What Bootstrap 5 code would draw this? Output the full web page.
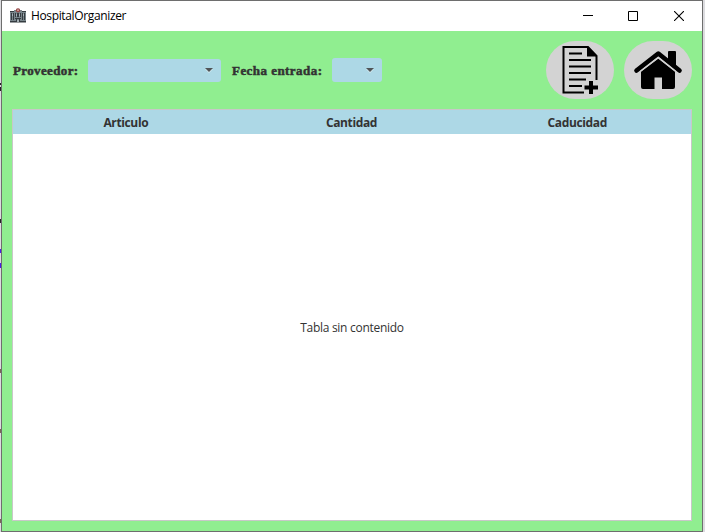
<!DOCTYPE html>
<html lang="es">
<head>
<meta charset="utf-8">
<meta name="viewport" content="width=device-width, initial-scale=1">
<title>HospitalOrganizer</title>
<link href="https://cdn.jsdelivr.net/npm/bootstrap@5.3.0/dist/css/bootstrap.min.css" rel="stylesheet">
<style>
html, body { height: 100%; }
body { background: #dcdcdf; font: 12px "Open Sans", "Noto Sans", sans-serif; color: #333; overflow: hidden; position: relative; }
svg { display: block; flex: none; }
.app-window { width: 702px; height: 532px; margin-left: 1px; border: 1px solid #6e6e6e; background: #90ee90; position: relative; }
.title-bar { height: 30px; background: #fff; color: #000; padding-left: 8px; }
.title-text { font-size: 12px; margin-left: 5px; letter-spacing: -.36px; line-height: 30px; }
.win-btn { width: 45.5px; height: 30px; background: none; border: 0; padding: 0; color: #000; }
.win-max { padding-right: 1px; }
.toolbar { height: 78px; padding: 0 10px; }
.field-label { font: bold 13px/20px "Liberation Serif", serif; -webkit-text-stroke: .5px #333; white-space: nowrap; padding: 2px 0 0 1px; }
.label-a { width: 67px; letter-spacing: .36px; }
.label-b { width: 90px; letter-spacing: .45px; }
.combo { background: #add8e6; border: 0; border-radius: 3px; padding: 0 8px 0 0; height: 23px; }
.combo-a { width: 133px; margin: 0 10px 0 9px; }
.combo-b { width: 50px; height: 24px; margin-left: 11px; }
.round-btn { width: 68px; height: 58px; border: 0; border-radius: 30px; background: #d3d3d3; padding: 0; color: #000; }
.data-table { width: 680px; height: 412px; margin-left: 10px; border: 1px solid #c8c8c8; background: #fff; }
.data-head { height: 24px; background: #add8e6; font-weight: 700; line-height: 26px; padding-right: 1px; letter-spacing: -.36px; }
.empty-note { letter-spacing: -.28px; padding-top: 1px; }
.stray { position: absolute; left: 0; width: 2px; }
</style>
<script src="https://cdn.jsdelivr.net/npm/bootstrap@5.3.0/dist/js/bootstrap.bundle.min.js"></script>
</head>
<body>
<svg class="stray" style="top:0" width="2" height="532" aria-hidden="true">
<path fill="#222" d="M0 83h2v2H0zM0 87h2v4H0zM0 219h2v4H0z"/><path fill="#4a20e8" d="M0 249h2v4H0zM0 263h1v5H0z"/><path fill="#765" d="M0 369h2v4H0zM0 429h2v4H0zM0 519h2v4H0z"/>
</svg>
<main class="app-window d-flex flex-column">
  <header class="title-bar d-flex align-items-center flex-shrink-0">
    <svg width="16" height="16" viewBox="0 0 16 16">
      <path fill="#78858b" d="M0 3h5v11H0zM11 3h5v11h-5zM4 2h8v12H4z"/>
      <path fill="#353c41" d="M0 3h4v1H0zM12 3h4v1h-4zM1 5h1v7H1zM3 5h1v7H3zM12 5h1v7h-1zM14 5h1v7h-1zM5 5h1v4H5zM7 5h2v4H7zM10 5h1v4h-1zM5 10h6v1H5zM6 11h1v3H6zM9 11h1v3H9zM0 13h16v1.5H0z"/>
      <circle cx="8" cy="2.3" r="2.1" fill="#8f3c3a"/><path fill="#d0a5a3" d="M7.5 1.300h1v2h-1zM7 1.800h2v1H7z"/>
      <path fill="#a5b0b5" d="M2 6h1v2H2zM13 6h1v2h-1zM6 6h1v2H6zM9 6h1v2H9zM7 12h2v2H7z"/>
    </svg>
    <span class="title-text me-auto">HospitalOrganizer</span>
    <button class="win-btn d-flex align-items-center justify-content-center" aria-label="Minimizar"><svg width="10" height="10"><path d="M0 4h10v1H0z"/></svg></button>
    <button class="win-btn win-max d-flex align-items-center justify-content-center" aria-label="Maximizar"><svg width="10" height="10"><path d="M.5.5h9v9h-9z" fill="none" stroke="#000"/></svg></button>
    <button class="win-btn d-flex align-items-center justify-content-center" aria-label="Cerrar"><svg width="10" height="10"><path d="M0 0l10 10M10 0L0 10" stroke="#000" stroke-width="1.1"/></svg></button>
  </header>
  <section class="toolbar d-flex align-items-center flex-shrink-0">
    <label class="field-label label-a">Proveedor:</label>
    <button class="combo combo-a d-flex align-items-center justify-content-end" aria-label="Proveedor"><svg width="8" height="5"><path d="M0 1h8L4 5z" fill="#fff" opacity=".5"/><path d="M0 0h8L4 4z" fill="#505457"/></svg></button>
    <label class="field-label label-b">Fecha entrada:</label>
    <button class="combo combo-b d-flex align-items-center justify-content-end" aria-label="Fecha entrada"><svg width="8" height="5"><path d="M0 1h8L4 5z" fill="#fff" opacity=".5"/><path d="M0 0h8L4 4z" fill="#505457"/></svg></button>
    <button class="round-btn ms-auto" aria-label="Nueva entrada">
      <svg width="68" height="58" viewBox="0 0 68 58"><path d="M38 51.5H17.5V6H42l8.500 9v24" fill="none" stroke="#000" stroke-width="2"/><path d="M41 5l10 10.5H41z"/><path d="M23 12.5h13M23 19h22M23 25.5h22M23 32h22M23 38.5h17M23 45h13" stroke="#000" stroke-width="2.2"/><path d="M43 40h4v4.500h5v4h-5V53h-4v-4.500h-4.500v-4H43z"/></svg>
    </button>
    <button class="round-btn" style="margin-left:10px" aria-label="Inicio">
      <svg width="68" height="58" viewBox="0 0 68 58"><path d="M44 20V11q0-1 1-1h6q1 0 1 1v15z"/><path d="M12.500 29.500L34.300 12.500 55.500 29.500" fill="none" stroke="#000" stroke-width="4.600" stroke-linecap="round" stroke-linejoin="round"/><path d="M17 30.500L34.300 17.500 51 30.500V46q0 2-2 2H38V36.500h-7.500V48H19q-2 0-2-2z"/><path d="M16 30.800L34.300 16.700 52 30.800" fill="none" stroke="#d3d3d3" stroke-width="1.300"/></svg>
    </button>
  </section>
  <section class="data-table d-flex flex-column flex-shrink-0">
    <div class="data-head row g-0 text-center flex-shrink-0">
      <div class="col">Articulo</div><div class="col">Cantidad</div><div class="col">Caducidad</div>
    </div>
    <div class="empty-note flex-grow-1 d-flex align-items-center justify-content-center">Tabla sin contenido</div>
  </section>
</main>
</body>
</html>
